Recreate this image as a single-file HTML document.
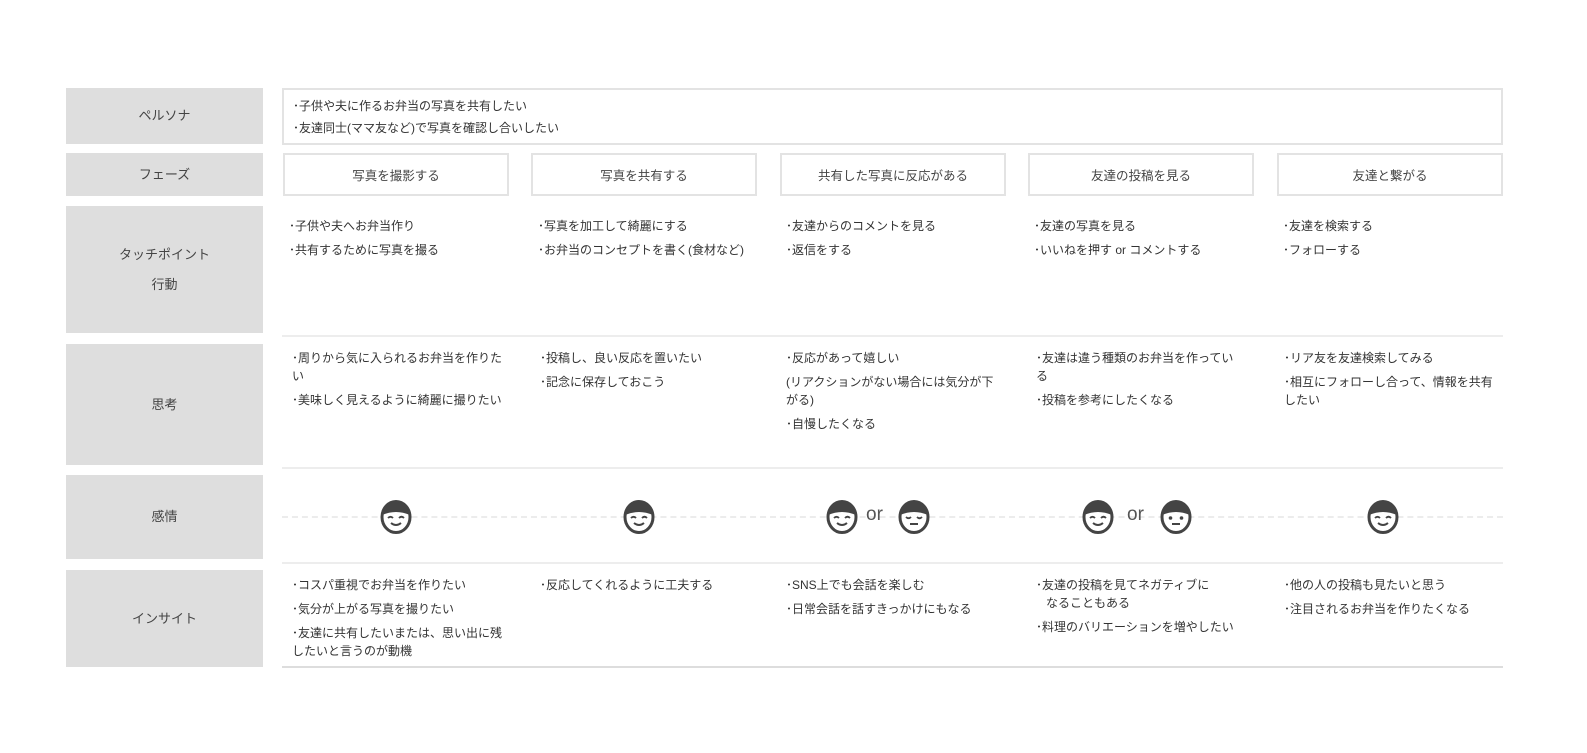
<!DOCTYPE html>
<html><head><meta charset="utf-8"><style>
*{margin:0;padding:0;box-sizing:border-box}
body{width:1587px;height:753px;background:#fff;position:relative;overflow:hidden;font-family:"Liberation Sans","Noto Sans CJK JP",sans-serif;color:#333;font-size:12px}
.lab{position:absolute;left:66px;width:197px;background:#dedede;display:flex;align-items:center;justify-content:center;text-align:center;font-size:13px;color:#444;line-height:30px}
.box{position:absolute;border:2px solid #e3e3e3;background:#fff}
.ph{position:absolute;top:153px;height:43px;width:226px;border:2px solid #e3e3e3;display:flex;align-items:center;justify-content:center;font-size:12.5px;color:#444}
.cell{position:absolute;width:225px;white-space:nowrap;line-height:18px}
.cell p{margin-bottom:6px}
.hl{position:absolute;left:282px;width:1221px;height:2px;background:#ededed}
svg.f{position:absolute}
.or{position:absolute;top:504px;font-size:19px;color:#555}
</style></head><body>

<div class="lab" style="top:88px;height:56px">ペルソナ</div>
<div class="lab" style="top:153px;height:43px">フェーズ</div>
<div class="lab" style="top:206px;height:127px">タッチポイント<br>行動</div>
<div class="lab" style="top:344px;height:121px">思考</div>
<div class="lab" style="top:475px;height:84px">感情</div>
<div class="lab" style="top:570px;height:97px">インサイト</div>

<div class="box" style="left:282px;top:88px;width:1221px;height:57px"></div>
<div class="cell" style="left:293px;top:95px;line-height:22px">･子供や夫に作るお弁当の写真を共有したい<br>･友達同士(ママ友など)で写真を確認し合いしたい</div>

<div class="ph" style="left:283px">写真を撮影する</div>
<div class="ph" style="left:531px">写真を共有する</div>
<div class="ph" style="left:780px">共有した写真に反応がある</div>
<div class="ph" style="left:1028px">友達の投稿を見る</div>
<div class="ph" style="left:1277px">友達と繋がる</div>

<div class="cell" style="left:289px;top:217px"><p>･子供や夫へお弁当作り</p><p>･共有するために写真を撮る</p></div>
<div class="cell" style="left:538px;top:217px"><p>･写真を加工して綺麗にする</p><p>･お弁当のコンセプトを書く(食材など)</p></div>
<div class="cell" style="left:786px;top:217px"><p>･友達からのコメントを見る</p><p>･返信をする</p></div>
<div class="cell" style="left:1034px;top:217px"><p>･友達の写真を見る</p><p>･いいねを押す or コメントする</p></div>
<div class="cell" style="left:1283px;top:217px"><p>･友達を検索する</p><p>･フォローする</p></div>

<div class="hl" style="top:335px"></div>

<div class="cell" style="left:292px;top:349px"><p>･周りから気に入られるお弁当を作りた<br>い</p><p>･美味しく見えるように綺麗に撮りたい</p></div>
<div class="cell" style="left:540px;top:349px"><p>･投稿し、良い反応を置いたい</p><p>･記念に保存しておこう</p></div>
<div class="cell" style="left:786px;top:349px"><p>･反応があって嬉しい</p><p>(リアクションがない場合には気分が下<br>がる)</p><p>･自慢したくなる</p></div>
<div class="cell" style="left:1036px;top:349px"><p>･友達は違う種類のお弁当を作ってい<br>る</p><p>･投稿を参考にしたくなる</p></div>
<div class="cell" style="left:1284px;top:349px"><p>･リア友を友達検索してみる</p><p>･相互にフォローし合って、情報を共有<br>したい</p></div>

<div class="hl" style="top:467px"></div>

<div style="position:absolute;left:282px;top:516px;width:1221px;border-top:2px dashed #ececec"></div>

<svg width="0" height="0" style="position:absolute"><defs>
<g id="hap"><ellipse cx="16" cy="17" rx="14" ry="15.5" fill="#fff" stroke="#444" stroke-width="3"/><path d="M2 15 A14 14 0 0 1 30 15 Q16 9 2 15Z" fill="#444"/><path d="M8 18 q2.5 -2.5 5 0 M19 18 q2.5 -2.5 5 0" stroke="#444" stroke-width="1.8" fill="none"/><path d="M11 23 q5 4 10 0" stroke="#444" stroke-width="2" fill="none"/></g>
<g id="sad"><ellipse cx="16" cy="17" rx="14" ry="15.5" fill="#fff" stroke="#444" stroke-width="3"/><path d="M2 15 A14 14 0 0 1 30 15 Q16 9 2 15Z" fill="#444"/><path d="M8 17 q2.5 2.5 5 0 M19 17 q2.5 2.5 5 0" stroke="#444" stroke-width="1.8" fill="none"/><path d="M12 24 h8" stroke="#444" stroke-width="2"/></g>
<g id="neu"><ellipse cx="16" cy="17" rx="14" ry="15.5" fill="#fff" stroke="#444" stroke-width="3"/><path d="M2 15 A14 14 0 0 1 30 15 Q16 9 2 15Z" fill="#444"/><circle cx="10.5" cy="18" r="1.8" fill="#444"/><circle cx="21.5" cy="18" r="1.8" fill="#444"/><path d="M12 24 h8" stroke="#444" stroke-width="2"/></g>
</defs></svg>
<svg class="f" style="left:380px;top:500px" width="32" height="35"><use href="#hap"/></svg>
<svg class="f" style="left:623px;top:500px" width="32" height="35"><use href="#hap"/></svg>
<svg class="f" style="left:826px;top:500px" width="32" height="35"><use href="#hap"/></svg>
<div class="or" style="left:866px">or</div>
<svg class="f" style="left:898px;top:500px" width="32" height="35"><use href="#sad"/></svg>
<svg class="f" style="left:1082px;top:500px" width="32" height="35"><use href="#hap"/></svg>
<div class="or" style="left:1127px">or</div>
<svg class="f" style="left:1160px;top:500px" width="32" height="35"><use href="#neu"/></svg>
<svg class="f" style="left:1367px;top:500px" width="32" height="35"><use href="#hap"/></svg>

<div class="hl" style="top:562px"></div>

<div class="cell" style="left:292px;top:576px"><p>･コスパ重視でお弁当を作りたい</p><p>･気分が上がる写真を撮りたい</p><p>･友達に共有したいまたは、思い出に残<br>したいと言うのが動機</p></div>
<div class="cell" style="left:540px;top:576px"><p>･反応してくれるように工夫する</p></div>
<div class="cell" style="left:786px;top:576px"><p>･SNS上でも会話を楽しむ</p><p>･日常会話を話すきっかけにもなる</p></div>
<div class="cell" style="left:1036px;top:576px"><p>･友達の投稿を見てネガティブに<br>&nbsp;&nbsp;&nbsp;なることもある</p><p>･料理のバリエーションを増やしたい</p></div>
<div class="cell" style="left:1284px;top:576px"><p>･他の人の投稿も見たいと思う</p><p>･注目されるお弁当を作りたくなる</p></div>

<div class="hl" style="top:666px;background:#ddd"></div>
</body></html>
